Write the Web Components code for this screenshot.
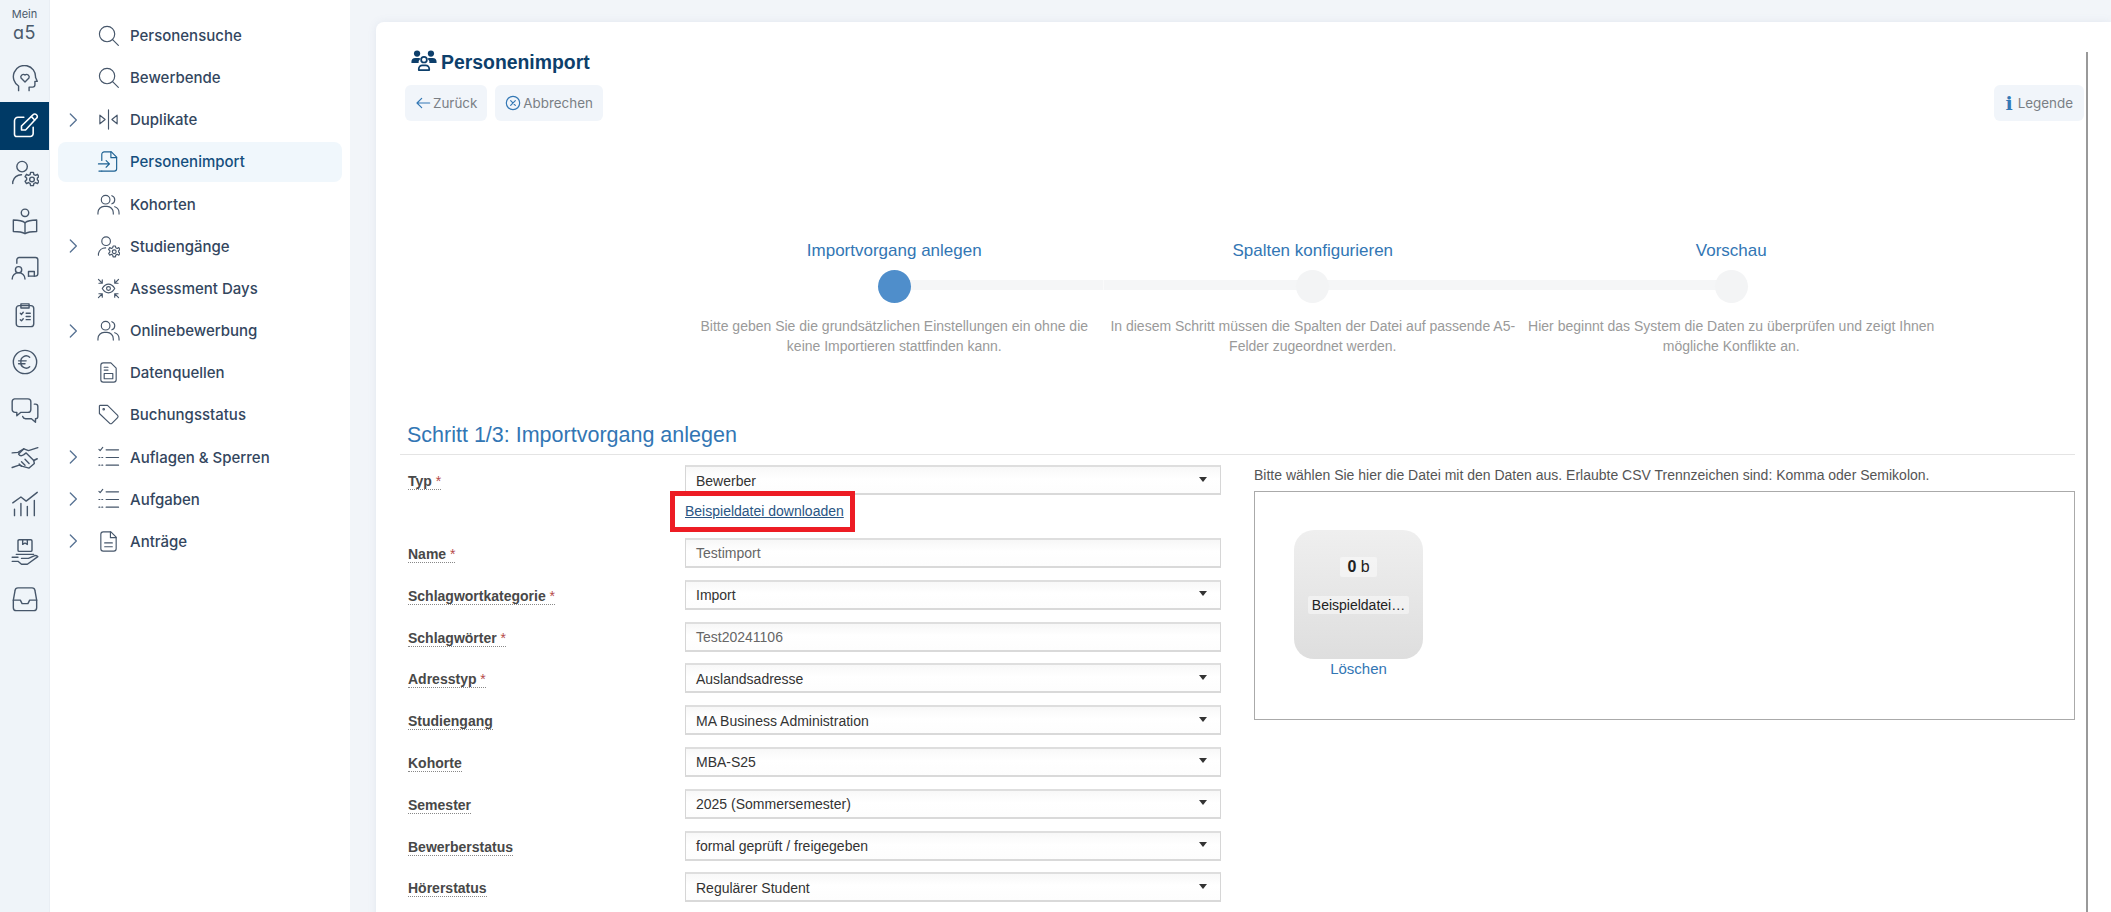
<!DOCTYPE html>
<html lang="de">
<head>
<meta charset="utf-8">
<title>Personenimport</title>
<style>
  html, body { margin: 0; height: 100%; overflow: hidden; }
  body { background: #f2f5f9; font-family: "Liberation Sans", Arial, sans-serif; }
  app-shell { height: 912px; }
</style>
</head>
<body>
<app-shell>
  <app-rail slot="rail"></app-rail>
  <side-nav slot="nav"></side-nav>
  <import-card></import-card>
</app-shell>

<script>
'use strict';

(function() {
  const GEAR = '<circle cx="18" cy="17.500" r="2"/><path d="M16.800 11.500h2.400l.4 1.800 1.500.7 1.600-.9 1.200 2-1.300 1.200v1.500l1.300 1.300-1.200 2-1.600-.9-1.500.8-.4 1.800h-2.400l-.4-1.800-1.500-.8-1.600.9-1.200-2 1.300-1.300v-1.500l-1.300-1.200 1.200-2 1.600.9 1.500-.7z"/>';
  const ICONS = {
    head: '<path d="M6.500 22v-4A9.500 9.500 0 1 1 21 10.500l1.500 3.500h-2v3a2 2 0 0 1-2 2h-3v3"/><path d="M12 14.500l-3.400-3.300a2.200 2.200 0 0 1 3.400-2.600 2.200 2.200 0 0 1 3.400 2.600z"/>',
    edit: '<path d="M11 4.500H6a3 3 0 0 0-3 3V19a2 2 0 0 0 2 2h11.500a2.500 2.500 0 0 0 2.500-2.500V13"/><path d="M9 15.500V12L19 2.200a1.800 1.800 0 0 1 2.600 0l.4.4a1.800 1.800 0 0 1 0 2.600L12.500 15.500z"/><path d="M17.500 4l2.800 2.800"/>',
    userGear: '<circle cx="9.500" cy="6.500" r="4.500"/><path d="M1.500 21v-1.500A7.500 7.500 0 0 1 9 13.500"/>' + GEAR,
    book: '<circle cx="12" cy="5" r="3.200"/><path d="M12 13.500c-2.500-2-6-2.300-10-2.300V21c4 0 7.500.3 10 1.800 2.500-1.500 6-1.800 10-1.800v-9.800c-4 0-7.500.3-10 2.300z"/><path d="M12 13.500v9.300"/>',
    board: '<path d="M5 8V5a2 2 0 0 1 2-2h14a2 2 0 0 1 2 2v12a2 2 0 0 1-2 2h-6"/><path d="M15 19v-4h5v4"/><circle cx="6.500" cy="13.500" r="2.700"/><path d="M1 21.500a5.500 5.500 0 0 1 11 0"/>',
    clipboard: '<rect x="4.500" y="4" width="15" height="18" rx="2.500"/><path d="M8.500 2.500h7V6h-7z"/><path d="M8 10.500l1 1 1.500-1.800M8 16l1 1 1.500-1.800M13 10.500h3.500M13 16h3.500M13 13.300h3.500"/>',
    euro: '<circle cx="12" cy="12" r="10"/><path d="M16 8a4.500 4.500 0 0 0-7.500 4 4.500 4.500 0 0 0 7.500 4M6.500 11H13M6.500 13.500H12"/>',
    chat: '<path d="M3 2.500h11.500A2.500 2.500 0 0 1 17 5v6.500a2.500 2.500 0 0 1-2.500 2.500H8.500L5 17v-3H3.500A2.500 2.500 0 0 1 1 11.500V5a2.500 2.500 0 0 1 2-2.500z"/><path d="M20 7h1a2 2 0 0 1 2 2v8.500a2 2 0 0 1-2 2v3l-3.500-3h-5A3 3 0 0 1 10 17.500"/>',
    handshake: '<path d="M1 8.500l5-.5 5-3 4 1.500 8-2.500"/><path d="M11 5L6.500 9.500c1 1.500 3 1.500 4.500.5l2-1.500 6.500 6.500"/><path d="M1 21l6-2 3 1 5.500 1.500 4.500-4-.5-2.500 3-1.500"/><path d="M9 16l3 3M12 14l3.500 3.500M7 18l2 2"/>',
    chart: '<path d="M1.500 11l7-5 4.500 3.500L22.500 2"/><path d="M3 22v-5.500M8.500 22V11.500M14 22v-8M20 22V9"/>',
    handBox: '<rect x="6" y="1.500" width="12" height="10" rx="1"/><path d="M10 1.500v4l2-1.200 2 1.200v-4M4.500 14h15M1 20h5l3 2.500h5l9-6.500c-.8-1.200-2-1.300-3.200-.7L15 17.500H9M1 16.500h5"/>',
    inbox: '<path d="M6 2.500h12a2.500 2.500 0 0 1 2.500 2.200L22 13v6.500a2.500 2.500 0 0 1-2.500 2.500h-15A2.500 2.500 0 0 1 2 19.500V13l1.500-8.300A2.500 2.500 0 0 1 6 2.500z"/><path d="M2 13h6l1.500 3h5l1.500-3h6"/>',
    search: '<circle cx="10.500" cy="10.500" r="8"/><path d="M16.300 16.300l6 6"/>',
    duplicate: '<path d="M12 2v20M3 7.500L8.500 12 3 16.500zM21 7.500L15.500 12l5.500 4.500z"/>',
    fileImport: '<path d="M5 11V4.500A2.500 2.500 0 0 1 7.500 2H15l5.500 5.500v12a2.500 2.500 0 0 1-2.500 2.500H5"/><path d="M14.500 2v6h6"/><path d="M1.500 14.500H13M9.500 11l3.500 3.500L9.500 18M2 22h3"/>',
    users: '<circle cx="9" cy="7" r="4.500"/><path d="M1 22v-1.500A6.500 6.500 0 0 1 7.500 14h3a6.500 6.500 0 0 1 6.500 6.500V22"/><path d="M15.500 2.800a4.500 4.500 0 0 1 0 8.500M18.500 14.300a6.500 6.500 0 0 1 4.500 6.200V22"/>',
    focusEye: '<path d="M5.500 12c1.800-3 4-4.500 6.500-4.500s4.700 1.500 6.500 4.500c-1.800 3-4 4.500-6.500 4.500S7.300 15 5.500 12z"/><circle cx="12" cy="12" r="2"/><path d="M1.500 2.500l4 4M5.500 3v3.500H2M22.500 2.500l-4 4M18.500 3v3.500H22M1.500 21.500l4-4M5.500 21v-3.500H2M22.500 21.500l-4-4M18.500 21v-3.500H22"/>',
    fileData: '<path d="M6.500 2h8L20 7.500v12a2.500 2.500 0 0 1-2.500 2.500h-11A2.500 2.500 0 0 1 4 19.500v-15A2.500 2.500 0 0 1 6.500 2z"/><path d="M7.500 6.500h4M7.500 9.500h4M7.500 13h9v5.500h-9z"/>',
    tag: '<path d="M3 2.500h8l10.500 10.500a1.500 1.500 0 0 1 0 2.200l-6 6a1.500 1.500 0 0 1-2.200 0L2.500 11V3z"/><circle cx="7" cy="6.500" r=".8"/>',
    checklist: '<path d="M2 3.500l1.300 1.300L6 1.500M2 12h1M5 12h1M2 20h1M5 20h1M9.500 4h13M9.500 12h13M9.500 20h13"/>',
    file: '<path d="M6.500 2h8L20 7.500v12a2.500 2.500 0 0 1-2.500 2.500h-11A2.500 2.500 0 0 1 4 19.500v-15A2.500 2.500 0 0 1 6.500 2z"/><path d="M14 2v6h6M8 13.500h8M8 17.500h8"/>',
    chevron: '<path d="M8 3l9 9-9 9"/>',
    back: '<path d="M22 12H3M10 5l-7 7 7 7"/>',
    cancel: '<circle cx="12" cy="12" r="10"/><path d="M8.500 8.500l7 7M15.500 8.500l-7 7"/>'
  };

  // custom element with its template set in the class
  function define(name, css, html, init) {
    const tpl = document.createElement('template');
    tpl.innerHTML = `<style>${css}</style>${html}`;
    customElements.define(name, class extends HTMLElement {
      constructor() {
        super();
        this.attachShadow({ mode: 'open' }).appendChild(tpl.content.cloneNode(true));
      }
      connectedCallback() {
        if (init) init(this, this.shadowRoot);
      }
    });
  }

  define('ui-icon', `
    :host { display: inline-flex; width: var(--size, 20px); height: var(--size, 20px); flex: none; }
    svg { width: 100%; height: 100%; fill: none; stroke: currentColor; stroke-width: var(--sw, 1.4);
      stroke-linecap: round; stroke-linejoin: round; }
  `, '<svg viewBox="0 0 24 24"></svg>', (el, root) => {
    root.querySelector('svg').innerHTML = ICONS[el.getAttribute('name')] || '';
  });

  define('app-shell', `
    :host { display: flex; align-items: stretch; overflow: hidden; }
    main { flex: 1; min-width: 0; padding: 22px 0 0 26px; }
  `, '<slot name="rail"></slot><slot name="nav"></slot><main><slot></slot></main>');

  define('rail-item', `
    :host { display: flex; align-items: center; justify-content: center; height: 47.3px; color: #46566a; --size: 28px; --sw: 1.2; }
    :host([active]) { background: #003a66; color: #fff; --sw: 1.35; }
  `, '<slot></slot>');

  define('app-rail', `
    :host { display: block; width: 49px; flex: none; background: #eff4f9; border-right: 1px solid #e9eef4; }
    .brand { height: 55px; padding-top: 8px; box-sizing: border-box; text-align: center; color: #4a5a6c; font-family: Inter, sans-serif; }
    .mein { font-size: 11px; line-height: 13px; }
    .a5 { font-size: 18px; line-height: 21px; margin-top: 1px; letter-spacing: .5px; font-feature-settings: "cv11"; }
  `, `<div class="brand"><div class="mein">Mein</div><div class="a5">a5</div></div>
    <rail-item><ui-icon name="head"></ui-icon></rail-item>
    <rail-item active><ui-icon name="edit"></ui-icon></rail-item>
    <rail-item><ui-icon name="userGear"></ui-icon></rail-item>
    <rail-item><ui-icon name="book"></ui-icon></rail-item>
    <rail-item><ui-icon name="board"></ui-icon></rail-item>
    <rail-item><ui-icon name="clipboard"></ui-icon></rail-item>
    <rail-item><ui-icon name="euro"></ui-icon></rail-item>
    <rail-item><ui-icon name="chat"></ui-icon></rail-item>
    <rail-item><ui-icon name="handshake"></ui-icon></rail-item>
    <rail-item><ui-icon name="chart"></ui-icon></rail-item>
    <rail-item><ui-icon name="handBox"></ui-icon></rail-item>
    <rail-item><ui-icon name="inbox"></ui-icon></rail-item>`);

  define('nav-item', `
    :host { display: flex; align-items: center; height: 40px; margin: 0 8px; border-radius: 8px;
      color: #33465e; font: 500 15px Inter, sans-serif; }
    :host([active]) { background: #f0f7fc; color: #154f7e; }
    .arrow { width: 40px; padding-left: 7px; box-sizing: border-box; display: flex; color: #587394; --size: 16px; --sw: 2; }
    .arrow ui-icon { visibility: hidden; }
    :host([expandable]) .arrow ui-icon { visibility: visible; }
    .icon { width: 32px; display: flex; color: #46566a; --size: 23px; --sw: 1.2; margin-left: -1px; margin-right: 1px; }
    :host([active]) .icon { color: #1c6192; }
  `, `<span class="arrow"><ui-icon name="chevron"></ui-icon></span>
    <span class="icon"><ui-icon></ui-icon></span><slot></slot>`, (el, root) => {
    const icon = root.querySelector('.icon ui-icon');
    icon.shadowRoot.querySelector('svg').innerHTML = ICONS[el.getAttribute('icon')] || '';
  });

  define('side-nav', `
    :host { display: flex; flex-direction: column; gap: 2.17px; width: 300px; flex: none; background: #fff; padding-top: 15.5px; box-sizing: border-box; }
  `, `<nav-item icon="search">Personensuche</nav-item>
    <nav-item icon="search">Bewerbende</nav-item>
    <nav-item icon="duplicate" expandable>Duplikate</nav-item>
    <nav-item icon="fileImport" active>Personenimport</nav-item>
    <nav-item icon="users">Kohorten</nav-item>
    <nav-item icon="userGear" expandable>Studiengänge</nav-item>
    <nav-item icon="focusEye">Assessment Days</nav-item>
    <nav-item icon="users" expandable>Onlinebewerbung</nav-item>
    <nav-item icon="fileData">Datenquellen</nav-item>
    <nav-item icon="tag">Buchungsstatus</nav-item>
    <nav-item icon="checklist" expandable>Auflagen &amp; Sperren</nav-item>
    <nav-item icon="checklist" expandable>Aufgaben</nav-item>
    <nav-item icon="file" expandable>Anträge</nav-item>`);

  define('page-btn', `
    :host { display: inline-flex; align-items: center; gap: 2px; height: 36px; padding: 0 10px; box-sizing: border-box;
      background: #f1f5fa; border-radius: 6px; color: #7a7f85; font: 400 13.4px Inter, sans-serif; }
    ::slotted(ui-icon) { color: #3478b5; --size: 16px; --sw: 1.8; }
  `, '<slot></slot>');

  define('wizard-step', `
    :host { display: block; flex: 0 0 418.5px; width: 418.5px; text-align: center; }
    .title { color: #3276b4; font-size: 17px; line-height: 22px; margin-top: 1px; }
    .track { display: flex; align-items: center; justify-content: center; height: 34px; margin: 7px 0 13px;
      background: linear-gradient(#f5f6f7, #f5f6f7) no-repeat 50% 46% / 100% 10px; }
    :host([first]) .track { background-position: 100% 46%; background-size: 50% 10px; }
    :host([last]) .track { background-position: 0 46%; background-size: 50% 10px; }
    .dot { width: 33px; height: 33px; border-radius: 50%; background: #f3f4f5; }
    :host([current]) .dot { background: #4f8ecb; }
    .text { color: #9a9a9a; font-size: 14px; line-height: 20px; padding: 0 4px; }
  `, '<div class="title"></div><div class="track"><div class="dot"></div></div><div class="text"><slot></slot></div>',
  (el, root) => {
    root.querySelector('.title').textContent = el.getAttribute('title');
  });

  define('wizard-steps', `
    :host { display: flex; padding-left: 285px; }
  `, '<slot></slot>');

  define('form-row', `
    :host { display: grid; grid-template-columns: 285px 1fr; align-items: start; }
    .label { padding: 7px 0 0 8px; color: #484848; font-size: 14px; font-weight: 700; line-height: 18px; }
    .label span { border-bottom: 1px dotted #888; }
    .req { display: none; color: #b54a4a; font-weight: 400; font-style: normal; }
    :host([required]) .req { display: inline; }
  `, '<div class="label"><span><b></b><i class="req"> *</i></span></div><div><slot></slot></div>',
  (el, root) => {
    root.querySelector('b').textContent = el.getAttribute('label');
  });

  define('form-select', `
    :host { display: flex; align-items: center; justify-content: space-between; height: 30px; box-sizing: border-box;
      border: 1px solid #d6d6d6; border-top: 2px solid #dedede; border-bottom: 2px solid #d9d9d9; padding: 1px 11px 0 10px;
      background: linear-gradient(#f8f8f8, #fff 45%, #fdfdfd); color: #333; font-size: 14px; }
    .caret { width: 0; height: 0; border: 4px solid transparent; border-top: 5px solid #333; border-bottom: 0; margin: -3px 2px 0 0; }
  `, '<slot></slot><span class="caret"></span>');

  define('form-input', `
    :host { display: flex; align-items: center; height: 30px; box-sizing: border-box;
      border: 1px solid #d6d6d6; border-top: 2px solid #dedede; border-bottom: 2px solid #d9d9d9; padding: 0 10px;
      background: linear-gradient(#f7f7f7, #fff 45%, #fdfdfd); color: #666; font-size: 14px; }
  `, '<slot></slot>');

  define('example-link', `
    :host { display: block; position: relative; height: 43px; padding: 7px 0 0; box-sizing: border-box; font-size: 14px; line-height: 18px; }
    a { color: #2a5584; text-decoration: underline; }
    .mark { position: absolute; left: -15px; top: -4px; width: 185px; height: 41px; box-sizing: border-box; border: 5px solid #ed1c24; }
  `, '<a href="#"><slot></slot></a><span class="mark"></span>');

  define('file-drop', `
    :host { display: block; }
    .hint { color: #555; font-size: 14px; line-height: 18px; height: 25px; margin-top: 1px; }
    .box { height: 229px; box-sizing: border-box; border: 1px solid #aaa; padding: 38px 39px 0; }
    .thumb { width: 129px; height: 129px; border-radius: 20px; background: linear-gradient(#efefef, #dedede);
      display: flex; flex-direction: column; align-items: center; color: #222; font-size: 14px; }
    .size { margin-top: 27px; height: 20px; padding: 0 7px; line-height: 20px; background: rgba(255,255,255,.45); font-size: 16px; border-radius: 2px; }
    .name { margin-top: 19px; height: 18px; padding: 0 4px; line-height: 18px; background: rgba(255,255,255,.45); border-radius: 2px; }
    .del { width: 129px; text-align: center; color: #3276b4; font-size: 15px; line-height: 18px; margin-top: 1px; }
  `, `<div class="hint"><slot></slot></div>
    <div class="box">
      <div class="thumb"><div class="size"><b>0</b> b</div><div class="name">Beispieldatei…</div></div>
      <div class="del">Löschen</div>
    </div>`);

  define('import-card', `
    :host { display: block; height: 960px; background: #fff; border-radius: 8px 0 0 0; position: relative; padding: 0 36px 0 24px;
      box-sizing: border-box; color: #333; box-shadow: 0 0 8px rgba(120,140,170,.12); }
    h1 { margin: 0; padding: 25px 0 0 11px; height: 63px; box-sizing: border-box; display: flex; align-items: flex-start; gap: 4px; color: #0d3f6b; font-size: 19.4px; line-height: 30px; }
    h1 svg { width: 26px; height: 21px; fill: currentColor; margin-top: 3px; }
    .actions { display: flex; gap: 8px; padding-left: 5px; }
    .actions .right { margin-left: auto; margin-right: -9px; gap: 5px; padding: 0 11px; }
    .scroll { position: absolute; right: 23px; top: 30px; bottom: 0; width: 2px; background: #999; }
    wizard-steps { margin-top: 118px; }
    h2 { margin: 65px 0 0; height: 34px; border-bottom: 1px solid #e4e4e4; color: #3276b4; font-weight: 400; font-size: 21.5px; line-height: 28px; padding-left: 7px; box-sizing: border-box; }
    .cols { display: flex; gap: 33px; margin-top: 10px; }
    .left { flex: 0 0 821px; display: flex; flex-direction: column; gap: 11.8px; }
    .rightcol { flex: 1; }
  `, `<h1><svg viewBox="0 0 30 24"><circle cx="7" cy="4" r="3.6"/><circle cx="23" cy="4" r="3.6"/><path d="M.5 15v-1.500A4.500 4.500 0 0 1 5 9h4c.8 0 1.500.2 2.100.6A6.500 6.500 0 0 0 8.800 15zM21.200 15a6.500 6.500 0 0 0-2.300-5.400c.6-.4 1.300-.6 2.100-.6h4a4.500 4.500 0 0 1 4.500 4.500V15z"/><circle cx="15" cy="11" r="3.300" fill="none" stroke="currentColor" stroke-width="2"/><path d="M9 23v-1.500A4 4 0 0 1 13 17.500h4a4 4 0 0 1 4 4V23z" fill="none" stroke="currentColor" stroke-width="2" stroke-linejoin="round"/></svg>Personenimport</h1>
    <div class="actions">
      <page-btn><ui-icon name="back"></ui-icon>Zurück</page-btn>
      <page-btn><ui-icon name="cancel"></ui-icon>Abbrechen</page-btn>
      <page-btn class="right"><span style="color:#3478b5;font:700 19px 'DejaVu Serif',serif;line-height:18px">i</span>Legende</page-btn>
    </div>
    <span class="scroll"></span>
    <wizard-steps>
      <wizard-step first current title="Importvorgang anlegen">Bitte geben Sie die grundsätzlichen Einstellungen ein ohne die keine Importieren stattfinden kann.</wizard-step>
      <wizard-step title="Spalten konfigurieren">In diesem Schritt müssen die Spalten der Datei auf passende A5-Felder zugeordnet werden.</wizard-step>
      <wizard-step last title="Vorschau">Hier beginnt das System die Daten zu überprüfen und zeigt Ihnen mögliche Konflikte an.</wizard-step>
    </wizard-steps>
    <h2>Schritt 1/3: Importvorgang anlegen</h2>
    <div class="cols">
      <div class="left">
        <form-row label="Typ" required><form-select>Bewerber</form-select><example-link>Beispieldatei downloaden</example-link></form-row>
        <form-row label="Name" required style="margin-top:-11.8px"><form-input>Testimport</form-input></form-row>
        <form-row label="Schlagwortkategorie" required><form-select>Import</form-select></form-row>
        <form-row label="Schlagwörter" required><form-input>Test20241106</form-input></form-row>
        <form-row label="Adresstyp" required><form-select>Auslandsadresse</form-select></form-row>
        <form-row label="Studiengang"><form-select>MA Business Administration</form-select></form-row>
        <form-row label="Kohorte"><form-select>MBA-S25</form-select></form-row>
        <form-row label="Semester"><form-select>2025 (Sommersemester)</form-select></form-row>
        <form-row label="Bewerberstatus"><form-select>formal geprüft / freigegeben</form-select></form-row>
        <form-row label="Hörerstatus"><form-select>Regulärer Student</form-select></form-row>
      </div>
      <div class="rightcol"><file-drop>Bitte wählen Sie hier die Datei mit den Daten aus. Erlaubte CSV Trennzeichen sind: Komma oder Semikolon.</file-drop></div>
    </div>`);
})();
</script>
</body>
</html>
